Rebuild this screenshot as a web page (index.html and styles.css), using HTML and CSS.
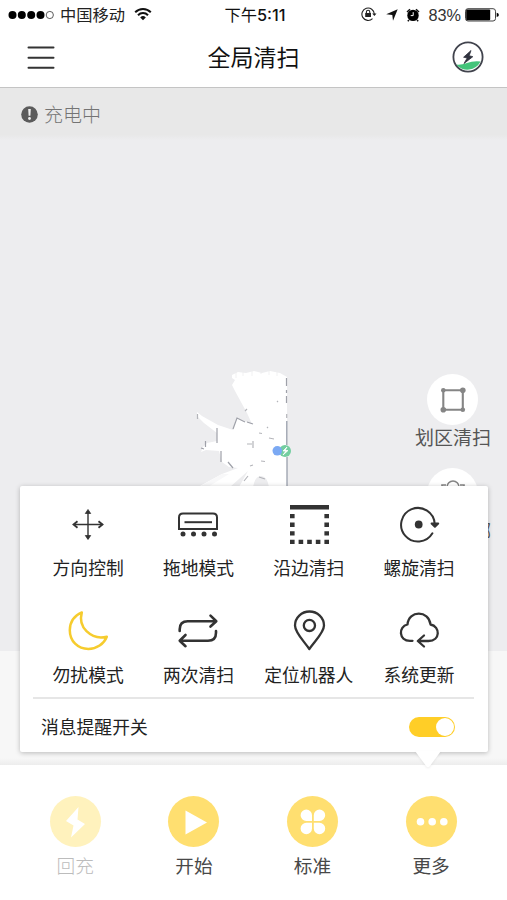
FILE: index.html
```html
<!DOCTYPE html>
<html lang="zh-CN">
<head>
<meta charset="utf-8">
<title>全局清扫</title>
<link rel="stylesheet" href="styles.css">
</head>
<body>
<div class="app">
  <div class="status">
    <div class="carrier">
      <svg width="47" height="10" viewBox="0 0 47 10"><circle cx="4.5" cy="5" r="4"/><circle cx="13.8" cy="5" r="4"/><circle cx="23.2" cy="5" r="4"/><circle cx="32.5" cy="5" r="4"/><circle cx="41.8" cy="5" r="3.6" fill="#fff" stroke="#333" stroke-width=".8"/></svg>
      <span class="carrier-name">中国移动</span>
      <svg class="wifi" width="18" height="14" viewBox="0 0 18 14" fill="none" stroke="#111" stroke-width="2"><path d="M1.2 5.2a11 11 0 0 1 15.6 0M4 8.2a7 7 0 0 1 10 0"/><path d="M9 13.2 6.2 10.4a4 4 0 0 1 5.6 0z" fill="#111" stroke="none"/></svg>
    </div>
    <div class="clock">下午<span class="time">5:11</span></div>
    <div class="indicators">
      <svg class="lock" width="16" height="14" viewBox="0 0 16 14" fill="none" stroke="#222" stroke-width="1.1"><path d="M11.5 11.6A6.2 6.2 0 1 1 13.3 7"/><path d="m11.2 6.6 2.2 2.4 2.1-2.4z" fill="#222" stroke="none"/><path d="M5.4 6V4.9a1.7 1.7 0 0 1 3.4 0V6"/><path d="M4.2 6h5.8v4H4.2z" fill="#222" stroke="none"/></svg>
      <svg class="nav" width="12" height="12" viewBox="0 0 12 12"><path d="M11.7.3 7 11.8 6.3 6 .2 5.2z" fill="#111"/></svg>
      <svg class="alarm" width="14" height="14" viewBox="0 0 14 14"><circle cx="7" cy="7.4" r="5.7"/><path d="M1 4 4 1.2M13 4 10 1.2M3 12l-1.2 1.3M11 12l1.2 1.3" stroke="#111" stroke-width="1.5"/><path d="M7.2 4.2v3.4H4.7" fill="none" stroke="#fff"/></svg>
      <span class="percent">83%</span>
      <svg width="34" height="14" viewBox="0 0 34 14"><rect x=".5" y=".7" width="30" height="12.3" rx="2.5" fill="#fff" stroke="#444"/><rect x="1.2" y="1.6" width="24" height="10.6" rx="1"/><path d="M31.7 4.8q2.2.5 2.2 2.1t-2.2 2.1z"/></svg>
    </div>
  </div>
  <header class="header">
    <svg class="menu" width="28" height="24" viewBox="0 0 28 24" stroke="#333" stroke-width="2" stroke-linecap="round"><path d="M1.5 1.5h25M1.5 11.7h25M1.5 21.8h25"/></svg>
    <h1>全局清扫</h1>
    <svg class="charge" width="32" height="32" viewBox="0 0 32 32"><path d="M4 23.6q5 .7 11-1.6t13.6-1.5A15 15 0 0 1 4 23.6" fill="#43c47a"/><circle cx="16" cy="16" r="14.6" fill="none" stroke="#41434d" stroke-width="1.8"/><path d="m19 9.5-7.4 6.7 3.6.8-3.2 5.5 8.8-6.8-3.6-1z" fill="#30323e" stroke="#30323e" stroke-width=".8"/></svg>
  </header>
  <main class="map">
    <div class="notice">
      <svg width="17" height="17" viewBox="0 0 17 17"><circle cx="8.5" cy="8.5" r="8.3" fill="#5b5b5b"/><path d="M7.2 3h2.6l-.4 6.7H7.6z" fill="#efefef"/><circle cx="8.5" cy="12.5" r="1.4" fill="#efefef"/></svg>
      <span>充电中</span>
    </div>
    <svg class="scan" width="130" height="135" viewBox="180 360 130 135">
      <path d="M232 375L238 372L246 373L254 371L262 373L270 371L280 373L287 377V487H198L222 474L238 468L229 467L222 462L219 451L206 450L201 452L203 447L207 443L217 441V433L204 423L197 416V412L202 416L218 425L233 430L237 418L252 424L247 413L235 391L232 385L235 380L232 378Z" fill="#fff"/>
      <path d="M230 487L248 471L239 487zM253 487q2-11 8-11t8 11z" fill="#ededef"/>
      <path d="M199 487L222 474L229 474L208 487z" fill="#f8f8f9"/>
      <path d="M236 371v7M243 370v6M252 369v7M261 369v5M269 370v5M277 370v6" stroke="#ededef" stroke-width=".8"/>
      <g fill="none" stroke="#b4b5ba" stroke-width="1.2">
        <path d="M286.8 421v24M287 457v38" stroke="#9298a6"/>
        <path d="M286.5 378v8M286.5 390v3M286.5 396v7M233 429l4-11 8 4M247 422l6 2M217 428v15M205.5 441v6M204 449l-3-1M221 451v11M228 462l5 6" stroke="#9fa1a9"/>
        <path d="M253 441v7M247 444h5M245 411l2-2M259 433l3 .5M269 438l5 1M250 466l3-1M261 461l4 .5M248 476l-4 5M259 477l6 2M277 402l1-1M197.5 414v5M267 427l1 1M286.7 414v4"/>
      </g>
      <circle cx="285" cy="451" r="6" fill="#74cea0"/><path d="m287 447-4 4h3l-3 4 5-4.5h-3z" fill="#fff" stroke="#fff" stroke-width=".8"/>
      <circle cx="277.3" cy="450.8" r="4.8" fill="#7ba9f3"/>
    </svg>
    <div class="tools">
      <div class="tool">
        <span class="tool-disc"><svg width="28" height="28" viewBox="0 0 28 28" fill="none" stroke="#858585" stroke-width="2.1"><path d="M4.3 4.3h19.5v19.5H4.3z"/><g fill="#858585" stroke="none"><circle cx="4.3" cy="4.3" r="2.3"/><circle cx="23.8" cy="4.3" r="2.8"/><circle cx="4.3" cy="23.8" r="2.8"/><circle cx="23.8" cy="23.8" r="2.3"/></g></svg></span>
        <span>划区清扫</span>
      </div>
      <div class="tool">
        <span class="tool-disc"><svg width="28" height="28" viewBox="0 0 28 28" fill="none" stroke="#858585" stroke-width="1.6"><circle cx="14" cy="7" r="6"/><path d="M7 5H3v20h22V5h-4"/></svg></span>
        <span>指哪到哪</span>
      </div>
    </div>
  </main>
  <div class="gap"></div>
  <nav class="dock">
    <div class="dock-item disabled"><span class="disc"><svg width="51" height="51" viewBox="0 0 51 51"><path d="M28.5 11 16 25l7.5 4.5L21 41.5 35 28l-7.5-4.5z" fill="#fff"/></svg></span><span>回充</span></div>
    <div class="dock-item"><span class="disc"><svg width="51" height="51" viewBox="0 0 51 51"><path d="M17.5 14.5v24L39 26.5z" fill="#fff"/></svg></span><span>开始</span></div>
    <div class="dock-item"><span class="disc"><svg width="51" height="51" viewBox="0 0 51 51" fill="#fff"><path d="M25 25h-5.7a5.7 5.7 0 1 1 5.7-5.7zM26.8 25h5.7a5.7 5.7 0 1 0-5.7-5.7zM25 26.8h-5.7a5.7 5.7 0 1 0 5.7 5.7zM26.8 26.8h5.7a5.7 5.7 0 1 1-5.7 5.7z"/></svg></span><span>标准</span></div>
    <div class="dock-item"><span class="disc"><svg width="51" height="51" viewBox="0 0 51 51" fill="#fff"><circle cx="14.5" cy="25.8" r="3.8"/><circle cx="26.2" cy="25.8" r="3.8"/><circle cx="37.8" cy="25.8" r="3.8"/></svg></span><span>更多</span></div>
  </nav>
  <section class="popover">
    <div class="modes">
      <div class="mode"><svg viewBox="0 0 44 44" stroke="#333" stroke-width="1.4" fill="none"><path d="M22 9v28M8.5 22.5h28"/><path d="m19.3 11.5 2.7-4 2.7 4zM19.3 33.5l2.7 4 2.7-4z" fill="#333" stroke-width=".8"/><path d="m11.5 19.3-4 3.2 4 3.2M32.5 19.3l4 3.2-4 3.2" stroke-width="1.8"/></svg><span>方向控制</span></div>
      <div class="mode"><svg viewBox="0 0 44 44" fill="none" stroke="#333" stroke-width="2"><path d="M3 27V15.5Q3 11.6 7 11.6h30q4 0 4 3.9V27z"/><path d="M8.5 20.2h27.5"/><g fill="#333" stroke="none"><circle cx="7" cy="32" r="2.5"/><circle cx="17.5" cy="32" r="2.5"/><circle cx="28" cy="32" r="2.5"/><circle cx="38.5" cy="32" r="2.5"/></g></svg><span>拖地模式</span></div>
      <div class="mode"><svg viewBox="0 0 44 44" fill="#333"><path d="M3 3h39v4.6H3zM3 12h4.6v4.3H3zM3 20.6h4.6v4.3H3zM3 29.2h4.6v4.3H3zM3 37.8h4.6v4.3H3zM11.6 37.8h4.6v4.3h-4.6zM20.2 37.8h4.6v4.3h-4.6zM28.8 37.8h4.6v4.3h-4.6zM37.4 37.8H42v4.3h-4.6zM37.4 12H42v4.3h-4.6zM37.4 20.6H42v4.3h-4.6zM37.4 29.2H42v4.3h-4.6z"/></svg><span>沿边清扫</span></div>
      <div class="mode"><svg viewBox="0 0 44 44" fill="none" stroke="#333" stroke-width="2" stroke-linecap="round"><path d="M35.4 31.3A16.8 16.8 0 1 1 37.7 22"/><path d="m34.6 21.5 3.3 3.3 3.3-3.3z" fill="#333" stroke-linejoin="round"/><circle cx="21.7" cy="22.5" r="3.9" fill="#333" stroke="none"/></svg><span>螺旋清扫</span></div>
      <div class="mode"><svg viewBox="0 0 44 44" fill="none" stroke="#f6cc2e" stroke-width="2.5" stroke-linejoin="round"><path d="M15.8 3.4Q4 8.5 3.8 21.2c0 11 8 18.7 18.6 18.7 8.2 0 15.6-5 18.4-12.2-6.8 1.9-14.5.1-20.3-5.5C14.6 16.4 14.2 9.5 15.8 3.4z"/></svg><span>勿扰模式</span></div>
      <div class="mode"><svg viewBox="0 0 44 44" fill="none" stroke="#333" stroke-width="2.6" stroke-linecap="round" stroke-linejoin="round"><path d="M3.7 22v-1.8q0-8 8-8H40M34.5 6.6l5.8 5.6-5.8 5.3"/><path d="M40 22v1.7q0 8-8 8H3.8M9.5 26l-5.8 5.7 5.8 5.5"/></svg><span>两次清扫</span></div>
      <div class="mode"><svg viewBox="0 0 44 44" fill="none" stroke="#333" stroke-width="2.3" stroke-linejoin="round"><path d="M22.3 40C16 31 8 23.5 8 16.5a14.5 14 0 0 1 29 0C37 23.5 28.6 31 22.3 40z"/><circle cx="22.4" cy="16.4" r="5.6"/></svg><span>定位机器人</span></div>
      <div class="mode"><svg viewBox="0 0 44 44" fill="none" stroke="#333" stroke-width="2.3" stroke-linecap="round" stroke-linejoin="round"><path d="M15.5 31.8H13C1.5 31.8 1.2 17.5 10.5 15.5 11.5 1 32 1 33.5 15.5 43.5 17.5 43.5 32 31.5 32H21.5M27 26.5l-6.2 5.5 6.2 5.5"/></svg><span>系统更新</span></div>
    </div>
    <div class="remind"><span>消息提醒开关</span><span class="switch"></span></div>
    <svg class="pointer" width="26" height="17" viewBox="0 0 26 17"><path d="M0 0h26L14.5 15.5q-1.5 1.5-3 0z" fill="#fff"/></svg>
  </section>
</div>
</body>
</html>
```

FILE: styles.css
```css
* { box-sizing: border-box; }
body {
  margin: 0;
  background: #fff;
  color: #222;
  font-family: "Noto Sans CJK SC", sans-serif;
}
svg { display: block; flex: none; }
.app {
  position: relative;
  width: 507px;
  height: 900px;
  overflow: hidden;
  display: flex;
  flex-direction: column;
}
.status {
  height: 29px;
  flex: none;
  display: grid;
  grid-template-columns: 1fr auto 1fr;
  align-items: center;
  padding: 0 8px;
  line-height: 28px;
}
.carrier { display: flex; align-items: center; }
.carrier-name { font-size: 16.3px; margin: 0 9px 0 5px; padding-bottom: 1px; }
.wifi { margin-bottom: 2px; }
.clock { font-size: 16.3px; font-weight: 400; color: #111; padding-left: 3px; }
.time { font-family: Inter, sans-serif; font-size: 16.3px; font-weight: 500; }
.indicators { display: flex; align-items: center; justify-content: flex-end; }
.lock { margin-bottom: 1px; }
.nav { margin-left: 9px; }
.alarm { margin-left: 8px; }
.percent { font-family: "Liberation Sans", sans-serif; font-size: 16.3px; margin: 0 4px 0 8px; color: #333; }
.header {
  height: 59px;
  flex: none;
  display: flex;
  align-items: center;
  justify-content: space-between;
  padding: 0 23px 2px 27px;
  border-bottom: 1px solid #c4c4c4;
}
.header h1 { margin: 0; padding-bottom: 3px; font-size: 23px; font-weight: 400; line-height: 34px; color: #111; }
.menu { margin-top: 1px; }
.map { position: relative; height: 563px; flex: none; background: #ededef; }
.notice {
  height: 52px;
  display: flex;
  align-items: center;
  gap: 6px;
  padding-left: 21px;
  background: linear-gradient(#e8e8e8 90%, #ededef);
  color: #747474;
  font-size: 19px;
  font-weight: 300;
}
.notice span { padding-bottom: 2px; }
.scan { position: absolute; left: 180px; top: 272px; }
.tools {
  position: absolute;
  top: 286px;
  right: 16px;
  display: flex;
  flex-direction: column;
  gap: 20px;
}
.tool { display: flex; flex-direction: column; align-items: center; font-size: 19px; line-height: 23px; color: #555; }
.tool-disc {
  width: 51px;
  height: 51px;
  border-radius: 50%;
  background: #fff;
  display: flex;
  align-items: center;
  justify-content: center;
}
.gap { height: 114px; flex: none; background: linear-gradient(#f7f7f7 94%, #ededed); }
.dock {
  flex: 1;
  display: grid;
  grid-template-columns: repeat(4, 118.6px);
  padding: 31px 0 0 16px;
  background: #fff;
}
.dock-item { display: flex; flex-direction: column; align-items: center; font-size: 18.7px; line-height: 35px; color: #484848; }
.disc { width: 51px; height: 51px; border-radius: 50%; background: #ffdf70; }
.disabled { color: #bcbcbc; font-weight: 300; }
.disabled .disc { background: #fff2bd; }
.popover {
  position: absolute;
  left: 20px;
  top: 486px;
  width: 468px;
  height: 266px;
  padding: 16px 14px 0;
  background: #fff;
  border-radius: 2px;
  box-shadow: 0 1px 5px rgba(0, 0, 0, .25);
}
.modes {
  display: grid;
  grid-template-columns: repeat(4, 110.3px);
  grid-auto-rows: 107px;
  height: 197px;
  margin: 0 0 0 -1px;
  border-bottom: 2px solid #e6e6e6;
}
.mode { display: flex; flex-direction: column; align-items: center; font-size: 17.8px; line-height: 26px; white-space: nowrap; }
.mode svg { width: 44px; height: 44px; margin-bottom: 8px; }
.remind {
  display: flex;
  align-items: center;
  justify-content: space-between;
  height: 53px;
  padding: 2px 19px 0 7px;
  font-size: 17.8px;
}
.remind span:first-child { padding-bottom: 1px; }
.switch {
  width: 46px;
  height: 20px;
  border-radius: 10px;
  background: #ffce27;
  display: flex;
  justify-content: flex-end;
  padding: 1px;
}
.switch::after { content: ""; width: 18px; height: 18px; border-radius: 50%; background: #fff; }
.pointer { position: absolute; left: 395px; top: 265px; filter: drop-shadow(0 1px 1px rgba(0, 0, 0, .07)); }
```
